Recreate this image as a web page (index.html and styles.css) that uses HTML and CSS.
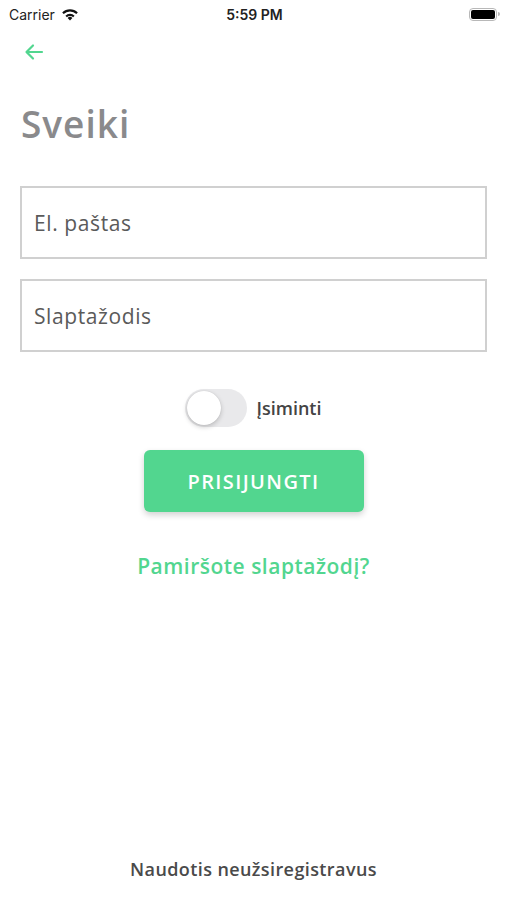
FILE: index.html
```html
<!DOCTYPE html>
<html lang="lt">
<head>
    <meta charset="UTF-8">
    <meta name="viewport" content="width=device-width, initial-scale=1.0">
    <title>Prisijungti</title>
    <link rel="stylesheet" href="styles.css">
</head>
<body>
    <div class="status-bar">
        <div class="status-left">
            <span>Carrier</span>
            <svg class="wifi" width="18" height="13" viewBox="0 0 18 13">
                <path d="M9 12.5 L6.6 9.9 A3.4 3.4 0 0 1 11.4 9.9 Z" fill="#111"/>
                <path d="M4.4 7.7 A6.5 6.5 0 0 1 13.6 7.7 L12.1 9.2 A4.4 4.4 0 0 0 5.9 9.2 Z" fill="#111"/>
                <path d="M1.2 4.6 A11 11 0 0 1 16.8 4.6 L15.3 6.1 A8.9 8.9 0 0 0 2.7 6.1 Z" fill="#111"/>
            </svg>
        </div>
        <div class="status-time">5:59 PM</div>
        <div class="status-right">
            <div class="battery"><div class="battery-level"></div></div>
            <div class="battery-cap"></div>
        </div>
    </div>

    <div class="nav">
        <svg class="back" width="20" height="18" viewBox="0 0 20 18">
            <path d="M18 9 H3 M9 2.5 L2.5 9 L9 15.5" fill="none" stroke="#52d68f" stroke-width="2.2" stroke-linecap="round" stroke-linejoin="round"/>
        </svg>
    </div>

    <h1 class="title">Sveiki</h1>

    <form class="login-form">
        <div class="field">El. paštas</div>
        <div class="field">Slaptažodis</div>

        <div class="remember">
            <div class="switch"><div class="knob"></div></div>
            <span>Įsiminti</span>
        </div>

        <button type="button" class="btn-login">PRISIJUNGTI</button>

        <a href="#" class="forgot">Pamiršote slaptažodį?</a>
    </form>

    <div class="guest">Naudotis neužsiregistravus</div>
</body>
</html>
```

FILE: styles.css
```css
body {
    margin: 0;
    padding: 0;
    width: 507px;
    height: 900px;
    background: #ffffff;
    font-family: 'Open Sans', 'Noto Sans', sans-serif;
    color: #4a4a4a;
    display: flex;
    flex-direction: column;
    overflow: hidden;
}

.status-bar {
    height: 28px;
    display: flex;
    align-items: center;
    justify-content: space-between;
    padding: 0 7px 0 9px;
    font-family: 'Inter', 'Roboto', sans-serif;
    font-size: 14px;
    color: #222;
}

.status-left {
    display: flex;
    align-items: center;
    gap: 6px;
    width: 120px;
}

.status-time {
    font-weight: 600;
}

.status-right {
    width: 120px;
    display: flex;
    justify-content: flex-end;
    align-items: center;
}

.battery {
    width: 24px;
    height: 9px;
    border: 1.5px solid #b8b8b8;
    border-radius: 4px;
    padding: 1px;
}

.battery-level {
    width: 100%;
    height: 100%;
    background: #000;
    border-radius: 2px;
}

.battery-cap {
    width: 2px;
    height: 4px;
    background: #b8b8b8;
    border-radius: 0 2px 2px 0;
    margin-left: 1px;
}

.nav {
    height: 48px;
    padding-left: 24px;
    display: flex;
    align-items: center;
}

.back {
    display: block;
}

.title {
    margin: 26px 0 0 21px;
    font-size: 37px;
    font-weight: 600;
    letter-spacing: 1px;
    color: #8a8a8c;
    line-height: 44px;
}

.login-form {
    display: flex;
    flex-direction: column;
    align-items: center;
    margin-top: 40px;
}

.field {
    box-sizing: border-box;
    width: 467px;
    height: 73px;
    border: 2px solid #d0d0d0;
    padding-left: 12px;
    display: flex;
    align-items: center;
    font-size: 21px;
    letter-spacing: 0.6px;
    color: #5a5a5a;
    margin-bottom: 20px;
}

.remember {
    display: flex;
    align-items: center;
    gap: 9px;
    margin-top: 17px;
}

.remember span {
    font-size: 18px;
    font-weight: 600;
    color: #444;
}

.switch {
    width: 62px;
    height: 38px;
    border-radius: 19px;
    background: #e9e9eb;
    padding: 2px;
    box-sizing: border-box;
}

.knob {
    width: 34px;
    height: 34px;
    border-radius: 50%;
    background: #fff;
    box-shadow: 0 2px 5px rgba(0, 0, 0, 0.2), 0 0 1px rgba(0, 0, 0, 0.15);
}

.btn-login {
    margin-top: 23px;
    width: 220px;
    height: 62px;
    border: none;
    border-radius: 6px;
    background: #52d68f;
    color: #fff;
    font-family: 'Open Sans', 'Noto Sans', sans-serif;
    font-size: 20px;
    font-weight: 600;
    letter-spacing: 1.4px;
    box-shadow: 0 3px 6px rgba(0, 0, 0, 0.18);
    cursor: pointer;
}

.forgot {
    margin-top: 40px;
    font-size: 21px;
    font-weight: 600;
    letter-spacing: 0.5px;
    color: #52d68f;
    text-decoration: none;
}

.guest {
    margin-top: auto;
    margin-bottom: 19px;
    text-align: center;
    font-size: 18px;
    font-weight: 600;
    letter-spacing: 0.4px;
    color: #4a4a4a;
}
```
